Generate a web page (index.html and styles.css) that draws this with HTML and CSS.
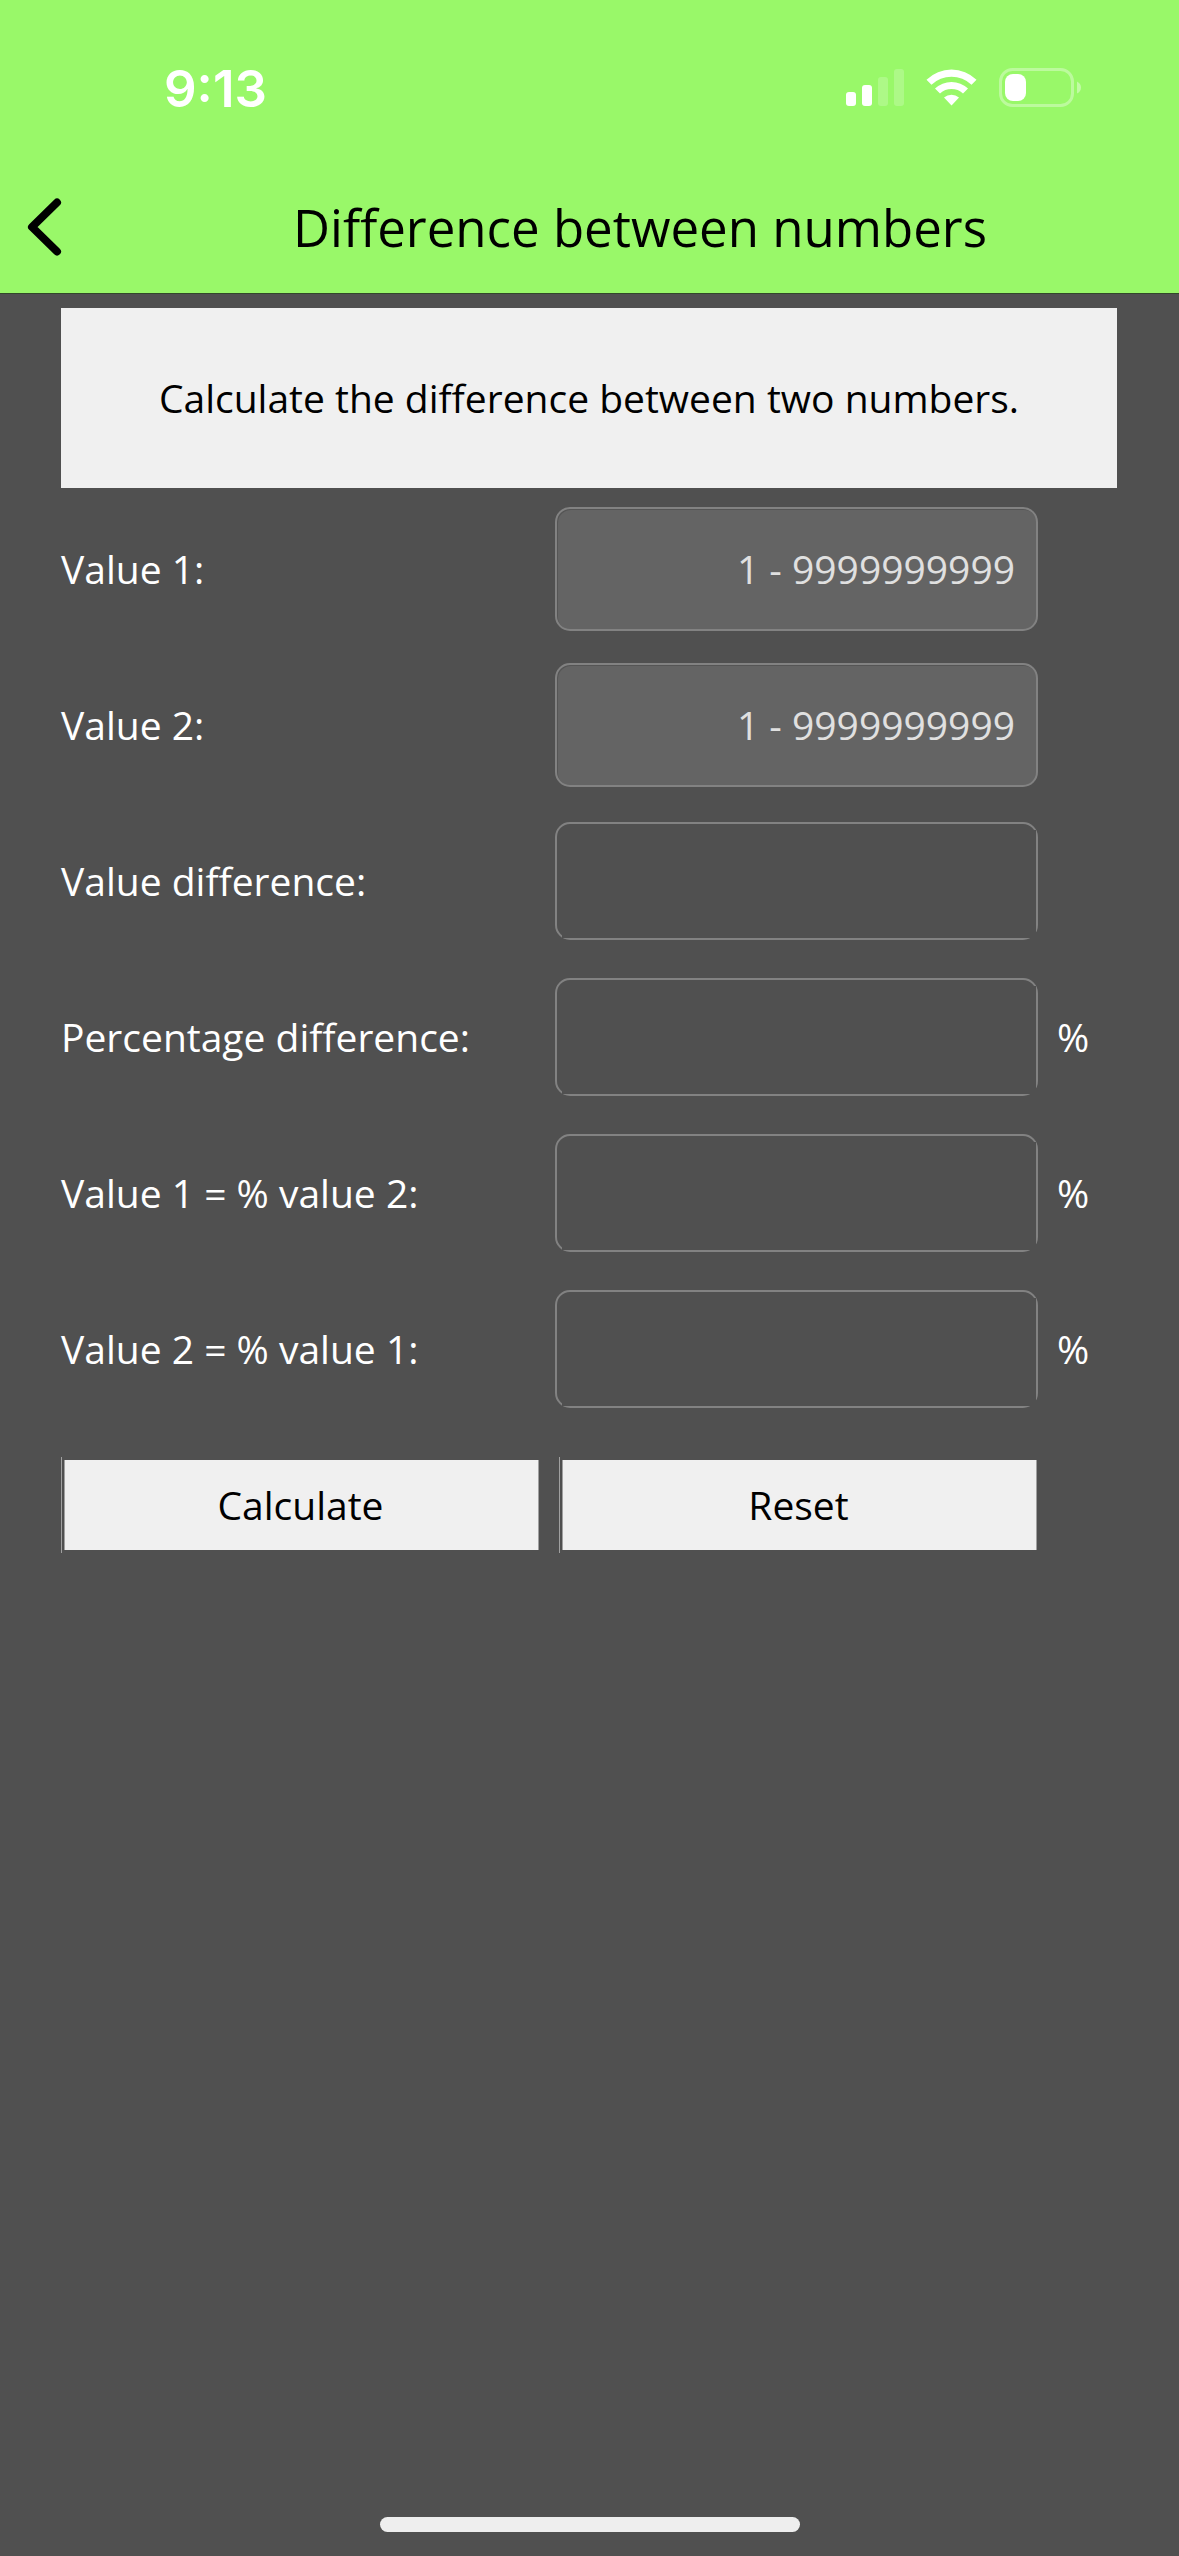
FILE: index.html
```html
<!DOCTYPE html>
<html lang="en">
<head>
<meta charset="utf-8">
<title>Difference between numbers</title>
<link rel="stylesheet" href="styles.css">
</head>
<body>
<header class="header">
  <div class="status">
    <span class="clock">9:13</span>
    <svg class="status-icons" width="240" height="44" viewBox="0 0 240 44" fill="#fff">
      <rect x="6" y="26" width="10" height="14" rx="3"/>
      <rect x="22" y="19" width="10" height="21" rx="3"/>
      <rect x="38" y="11" width="10" height="29" rx="3" opacity=".2"/>
      <rect x="54" y="3" width="10" height="37" rx="3" opacity=".2"/>
      <path d="M86.500 13.700A36 36 0 0 1 136.500 13.700L131.500 18.700A29 29 0 0 0 91.500 18.700Z"/>
      <path d="M95 22.500A24 24 0 0 1 128 22.500L123 27.500A17 17 0 0 0 100 27.500Z"/>
      <path d="M104 31.500A12 12 0 0 1 119 31.500L111.500 39.500Z"/>
      <rect x="160.500" y="3.500" width="72" height="36" rx="12" fill="none" stroke="#fff" stroke-width="3" opacity=".35"/>
      <rect x="165" y="8" width="21" height="27" rx="8"/>
      <path d="M237 15.500Q241 17.500 241 21.500T237 27.500Z" opacity=".4"/>
    </svg>
  </div>
  <div class="titlebar">
    <svg class="back" width="40" height="62" viewBox="0 0 40 62" fill="none" stroke="#000" stroke-width="8" stroke-linecap="round" stroke-linejoin="round"><path d="M33 6.500L8 31L33 55.500"/></svg>
    <h1 class="title">Difference between numbers</h1>
  </div>
</header>
<main class="content">
  <p class="intro">Calculate the difference between two numbers.</p>
  <div class="row"><label class="label" for="value1">Value 1:</label><input id="value1" class="field entry" placeholder="1 - 9999999999"></div>
  <div class="row"><label class="label" for="value2">Value 2:</label><input id="value2" class="field entry" placeholder="1 - 9999999999"></div>
  <div class="row"><span class="label">Value difference:</span><div class="field result"><div class="result-fill"></div></div></div>
  <div class="row"><span class="label">Percentage difference:</span><div class="field result"><div class="result-fill"></div></div><span class="label">%</span></div>
  <div class="row"><span class="label">Value 1 = % value 2:</span><div class="field result"><div class="result-fill"></div></div><span class="label">%</span></div>
  <div class="row"><span class="label">Value 2 = % value 1:</span><div class="field result"><div class="result-fill"></div></div><span class="label">%</span></div>
  <div class="actions">
    <div class="action"><button class="button">Calculate</button></div>
    <div class="action"><button class="button">Reset</button></div>
  </div>
</main>
<div class="home"></div>
</body>
</html>
```

FILE: styles.css
```css
* { box-sizing: border-box; }
body {
  margin: 0;
  width: 1179px;
  height: 2556px;
  display: flex;
  flex-direction: column;
  background: #505050;
  color: #fff;
  font-family: "Open Sans", sans-serif;
  font-size: 39px;
}
.header {
  height: 294px;
  background: #99f869;
  border-bottom: 1px solid #32482a;
  color: #000;
}
.status {
  display: flex;
  align-items: center;
  justify-content: space-between;
  height: 176px;
  padding: 0 99px 0 164px;
}
.clock {
  font: 600 51px Inter, sans-serif;
  color: #fff;
}
.status-icons { display: block; overflow: visible; }
.titlebar {
  display: flex;
  align-items: center;
  height: 101px;
  padding-left: 24px;
}
.title {
  margin: 0 0 0 229px;
  font-size: 51px;
  font-weight: 400;
  white-space: nowrap;
}
.content { flex: 1; padding: 14px 62px 0 61px; }
.intro {
  display: flex;
  align-items: center;
  justify-content: center;
  height: 180px;
  margin: 0 0 3px;
  padding-bottom: 2px;
  background: #f0f0f0;
  color: #000;
}
.row {
  display: grid;
  grid-template-columns: 474px 483px 1fr;
  column-gap: 20px;
  align-items: center;
  height: 156px;
}
.label { padding-bottom: 2px; }
.row > .label:first-child { margin-right: -20px; }
.row > .field { margin-left: 0; }
.row > .field + .label { margin-left: -1px; }
.field {
  width: 483px;
  border: 2px solid #828282;
  border-radius: 15px;
}
.entry {
  height: 124px;
  padding: 0 21px 2px;
  background: #646464;
  box-shadow: inset 1px 1px 0 #555;
  color: #fff;
  font: inherit;
  text-align: right;
}
.entry::placeholder { color: #e0e0e0; opacity: 1; }
.result { height: 118px; padding: 6px 0 0 5px; }
/* square-cornered fill that clips the rounded outline at its lower corners */
.result-fill { height: 100%; background: #505050; }
.actions { display: flex; gap: 20px; padding-top: 30px; }
.action {
  width: 478px;
  height: 96px;
  padding: 3px 0 3px 2px;
  border-left: 1px solid #a0a0a0;
}
.button {
  display: block;
  width: 475px;
  height: 90px;
  padding: 0 2px 2px 0;
  border: solid #a0a0a0;
  border-width: 0 1px;
  background: #f0f0f0;
  color: #000;
  font: inherit;
}
.home {
  width: 420px;
  height: 15px;
  margin: 0 auto 24px;
  border-radius: 8px;
  background: #eee;
}
```
